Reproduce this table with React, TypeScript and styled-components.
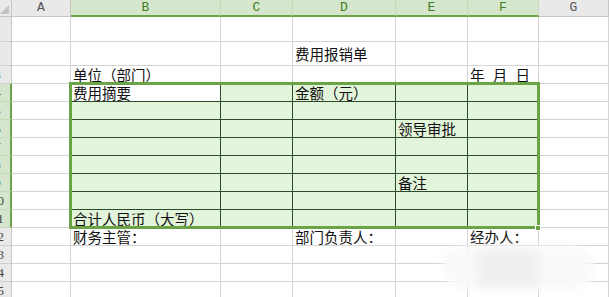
import React from "react";
import styled, { createGlobalStyle } from "styled-components";

const Global = createGlobalStyle`
  html, body { margin: 0; padding: 0; background: #fff; overflow: hidden; }
  #root { width: 609px; height: 297px; }
`;

const GRID = "#d4d4d4";
const HEAD_BG = "#e9e9e9";
const HEAD_LINE = "#c6c6c6";
const SEL_BG = "#d5e6cd";
const SEL_GREEN = "#6aa447";
const FILL = "#e2f4d9";
const DARK = "#2e4a2c";

const Sheet = styled.div`
  position: relative;
  display: grid;
  grid-template-columns: 12px 59px 150px 72px 103px 72px 71px 1fr;
  grid-template-rows: 17px 25px 24px repeat(13, 18px);
  width: 609px;
  height: 297px;
  overflow: hidden;
  background: #fff;
  font-family: "Noto Sans CJK SC", "Noto Sans", sans-serif;
`;

const Placed = styled.div<{ $r: number; $c: number }>`
  grid-row: ${(p) => p.$r};
  grid-column: ${(p) => p.$c};
  box-sizing: border-box;
`;

const Corner = styled(Placed)`
  position: relative;
  background: ${HEAD_BG};
  border-right: 1px solid ${HEAD_LINE};
  border-bottom: 1px solid ${HEAD_LINE};
  overflow: hidden;
  &::after {
    content: "";
    position: absolute;
    right: 2px;
    bottom: 2px;
    width: 0;
    height: 0;
    border-left: 9px solid transparent;
    border-bottom: 9px solid #c2c2c2;
  }
`;

const ColHead = styled(Placed)<{ $sel?: boolean }>`
  display: flex;
  align-items: center;
  justify-content: center;
  background: ${(p) => (p.$sel ? SEL_BG : HEAD_BG)};
  border-right: 1px solid ${(p) => (p.$sel ? "#c3d9b8" : HEAD_LINE)};
  border-bottom: ${(p) => (p.$sel ? `2px solid ${SEL_GREEN}` : `1px solid ${HEAD_LINE}`)};
  color: ${(p) => (p.$sel ? "#3f7d22" : "#555")};
  font-family: "Liberation Mono", monospace;
  font-size: 13px;
  line-height: 14px;
  padding-top: ${(p) => (p.$sel ? "1px" : "0")};
`;

const RowHead = styled(Placed)<{ $sel?: boolean }>`
  overflow: hidden;
  display: flex;
  align-items: center;
  background: ${(p) => (p.$sel ? SEL_BG : HEAD_BG)};
  border-right: ${(p) => (p.$sel ? `2px solid ${SEL_GREEN}` : `1px solid ${HEAD_LINE}`)};
  border-bottom: 1px solid ${(p) => (p.$sel ? "#c3d9b8" : "#d0d0d0")};
  color: #444;
  font-family: "Liberation Serif", serif;
  font-size: 13px;
`;

const RowNum = styled.span`
  flex: none;
  width: 26px;
  margin-left: -15.5px;
  text-align: center;
`;

type Kind = "plain" | "table" | "active";

const Cell = styled(Placed)<{ $kind: Kind; $mid?: boolean }>`
  display: flex;
  align-items: ${(p) => (p.$mid ? "center" : "flex-end")};
  padding: 0 0 1px 2px;
  white-space: nowrap;
  overflow: visible;
  background: ${(p) => (p.$kind === "table" ? FILL : "#fff")};
  border-right: 1px solid ${(p) => (p.$kind === "plain" ? GRID : DARK)};
  border-bottom: 1px solid ${(p) => (p.$kind === "plain" ? GRID : DARK)};
  color: #111;
  font-size: 14.5px;
  line-height: 15px;
  word-spacing: 5px;
  position: relative;
  z-index: 1;
`;

const Selection = styled.div`
  grid-column: 3 / 8;
  grid-row: 5 / 13;
  margin: -2px -1px -1px -2px;
  border: 3px solid ${SEL_GREEN};
  position: relative;
  z-index: 3;
  pointer-events: none;
`;

const Handle = styled.div`
  position: absolute;
  right: -4px;
  bottom: -5px;
  width: 6px;
  height: 6px;
  background: ${SEL_GREEN};
  border: 1px solid #fff;
  box-sizing: border-box;
`;

const Smudge = styled.div`
  position: absolute;
  left: 442px;
  top: 246px;
  width: 152px;
  height: 44px;
  border-radius: 22px;
  background: rgba(250, 250, 250, 0.93);
  filter: blur(3px);
  z-index: 5;
`;

const SmudgeSpot = styled.div`
  position: absolute;
  left: 478px;
  top: 250px;
  width: 60px;
  height: 36px;
  background: rgba(236, 236, 236, 0.8);
  filter: blur(4px);
  z-index: 6;
`;

const letters = ["A", "B", "C", "D", "E", "F", "G"];

const content: Record<string, string> = {
  "2-D": "费用报销单",
  "3-B": "单位（部门）",
  "3-F": "年 月 日",
  "4-B": "费用摘要",
  "4-D": "金额（元）",
  "6-E": "领导审批",
  "9-E": "备注",
  "11-B": "合计人民币（大写）",
  "12-B": "财务主管：",
  "12-D": "部门负责人：",
  "12-F": "经办人：",
};

export default function App() {
  const rows = Array.from({ length: 15 }, (_, i) => i + 1);
  return (
    <>
      <Global />
      <Sheet>
        <Corner $r={1} $c={1} />
        {letters.map((l, ci) => (
          <ColHead key={l} $r={1} $c={ci + 2} $sel={"BCDEF".includes(l)}>
            {l}
          </ColHead>
        ))}
        {rows.map((r) => (
          <React.Fragment key={r}>
            <RowHead $r={r + 1} $c={1} $sel={r >= 4 && r <= 11}>
              <RowNum>{r}</RowNum>
            </RowHead>
            {letters.map((l, ci) => {
              const inTable = r >= 4 && r <= 11 && "BCDEF".includes(l);
              const kind: Kind = inTable ? (r === 4 && l === "B" ? "active" : "table") : "plain";
              return (
                <Cell key={l} $r={r + 1} $c={ci + 2} $kind={kind} $mid={r === 2}>
                  {content[`${r}-${l}`] ?? ""}
                </Cell>
              );
            })}
          </React.Fragment>
        ))}
        <Selection>
          <Handle />
        </Selection>
        <Smudge />
        <SmudgeSpot />
      </Sheet>
    </>
  );
}
